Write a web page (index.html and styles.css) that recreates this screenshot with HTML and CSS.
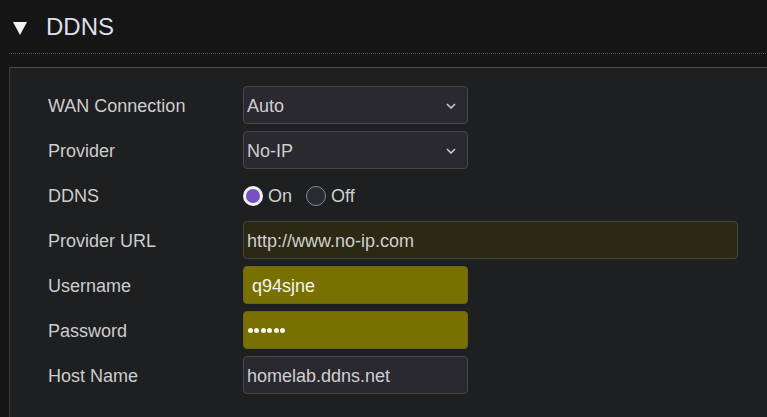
FILE: index.html
```html
<!DOCTYPE html>
<html lang="en">
  <head>
    <meta charset="UTF-8" />
    <meta name="viewport" content="width=device-width, initial-scale=1.0" />
    <title>DDNS</title>
    <link rel="stylesheet" href="styles.css">
  </head>
  <body>
    <div class="section">
      <div class="section-head">
        <span class="caret"></span>
        <h2>DDNS</h2>
      </div>

      <!-- DDNS settings -->
      <div class="panel">
        <div class="row">
          <label>WAN Connection</label>
          <div class="select">
            <span>Auto</span>
            <svg width="10" height="6" viewBox="0 0 10 6"><path d="M1 1 L5 5 L9 1" fill="none" stroke="#d0d0d0" stroke-width="1.5"/></svg>
          </div>
        </div>
        <div class="row">
          <label>Provider</label>
          <div class="select">
            <span>No-IP</span>
            <svg width="10" height="6" viewBox="0 0 10 6"><path d="M1 1 L5 5 L9 1" fill="none" stroke="#d0d0d0" stroke-width="1.5"/></svg>
          </div>
        </div>
        <div class="row">
          <label>DDNS</label>
          <div class="radios">
            <span class="radio checked"></span><span class="radio-label">On</span>
            <span class="radio"></span><span class="radio-label">Off</span>
          </div>
        </div>
        <div class="row">
          <label>Provider URL</label>
          <div class="field wide url">http://www.no-ip.com</div>
        </div>
        <div class="row">
          <label>Username</label>
          <div class="field autofill">q94sjne</div>
        </div>
        <div class="row">
          <label>Password</label>
          <div class="field autofill dots">
            <i></i><i></i><i></i><i></i><i></i><i></i>
          </div>
        </div>
        <div class="row">
          <label>Host Name</label>
          <div class="field">homelab.ddns.net</div>
        </div>
      </div>
    </div>
  </body>
</html>
```

FILE: styles.css
```css
body {
  font-family: "Liberation Sans", Arial, sans-serif;
  margin: 0;
  padding: 0;
  background-color: #151515;
  color: #cfcfcf;
  overflow: hidden;
}
.section {
  padding-left: 9px;
}
.section-head {
  display: flex;
  align-items: center;
  height: 53px;
  border-bottom: 1px dotted #5a5a5a;
  margin-right: -9px;
}
.caret {
  width: 0;
  height: 0;
  margin-left: 4px;
  margin-top: 4px;
  border-left: 7.5px solid transparent;
  border-right: 7.5px solid transparent;
  border-top: 13px solid #f4f4f4;
}
h2 {
  margin: 0 0 0 19px;
  font-size: 24px;
  font-weight: normal;
  color: #dcdfe8;
}
.panel {
  margin-top: 13px;
  background-color: #1e1f21;
  border-top: 1px solid #4a4a4a;
  border-left: 1px solid #3a3a3a;
  padding: 18px 0 0 38px;
  height: 340px;
}
.row {
  display: flex;
  align-items: center;
  height: 38px;
  margin-bottom: 7px;
}
.row label {
  width: 195px;
  font-size: 18px;
  color: #cdcdcd;
  padding-top: 2px;
}
.select,
.field {
  box-sizing: border-box;
  width: 225px;
  height: 38px;
  border: 1px solid #45454a;
  border-radius: 4px;
  background-color: #29292f;
  color: #cfcfcf;
  font-size: 18px;
  display: flex;
  align-items: center;
  padding: 2px 0 0 3px;
}
.select {
  justify-content: space-between;
  padding-right: 11px;
}
.field.wide {
  width: 495px;
}
.field.url {
  background-color: #2b2914;
  border-color: #47453a;
}
.field.autofill {
  background-color: #787000;
  border-color: #6a661c;
  color: #f4f4f0;
  padding-left: 8px;
}
.field.dots {
  padding: 0 0 0 4px;
  gap: 1.4px;
}
.field.dots i {
  width: 5px;
  height: 5px;
  border-radius: 50%;
  background-color: #f6f6f0;
}
.radios {
  display: flex;
  align-items: center;
  padding-top: 1px;
}
.radio {
  box-sizing: border-box;
  width: 20px;
  height: 20px;
  border-radius: 50%;
  border: 1.5px solid #8a8a90;
  background-color: #2a2a32;
}
.radio.checked {
  border: 3px solid #f2f2f2;
  background-color: #7453c0;
}
.radio-label {
  font-size: 18px;
  color: #cfcfcf;
  margin: 0 14px 0 5px;
  padding-top: 2px;
}
```
